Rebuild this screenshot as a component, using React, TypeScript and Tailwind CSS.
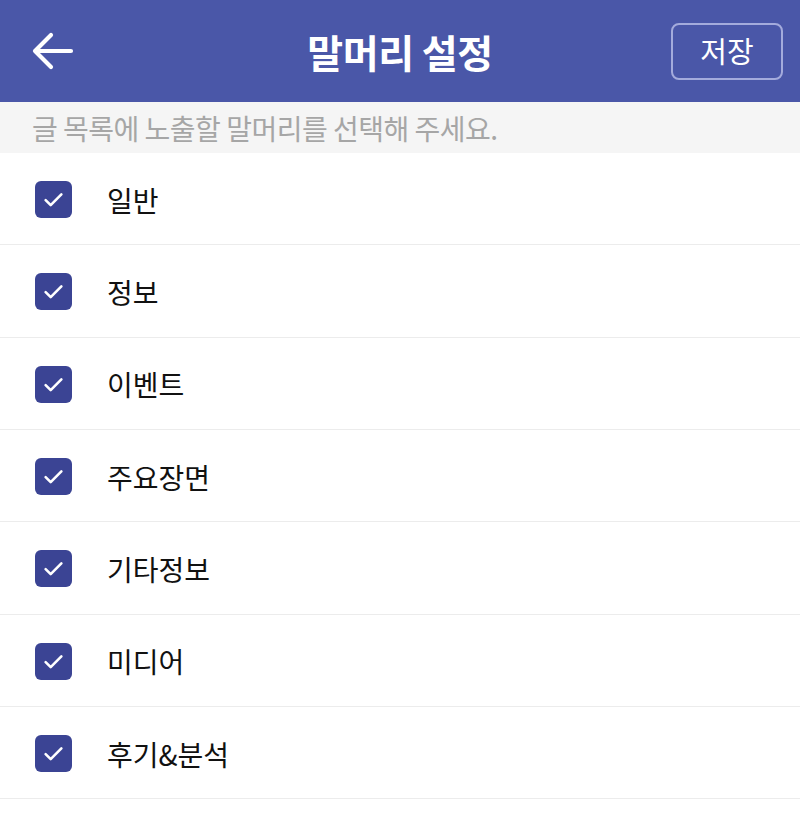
const categories = ['일반', '정보', '이벤트', '주요장면', '기타정보', '미디어', '후기&분석'];

function CheckBox() {
  return (
    <div className="flex h-[37px] w-[37px] items-center justify-center rounded-[6px] bg-[#3b4494]">
      <svg width="27" height="27" viewBox="0 0 24 24" fill="none">
        <path d="M5 12.5l4.5 4.5L19 7.5" stroke="white" strokeWidth="2.3" strokeLinecap="round" strokeLinejoin="round" />
      </svg>
    </div>
  );
}

export default function App() {
  return (
    <div className="min-h-[818px] w-full bg-white font-['Noto_Sans_CJK_KR','Noto_Sans',sans-serif]">
      <header className="relative flex h-[102px] items-center justify-between bg-[#4a57a8] px-[32px]">
        <svg width="42" height="38" viewBox="0 0 42 38" fill="none">
          <path d="M3 19h36M19 3L3 19l16 16" stroke="white" strokeWidth="4.2" strokeLinecap="round" strokeLinejoin="round" />
        </svg>
        <h1 className="absolute left-1/2 top-1/2 -translate-x-1/2 -translate-y-1/2 text-[39px] font-bold tracking-[-0.5px] text-white">
          말머리 설정
        </h1>
        <button className="-mr-[15px] flex h-[57px] w-[112px] items-center justify-center rounded-[8px] border-2 border-[#a4abdc] text-[29px] text-white">
          저장
        </button>
      </header>

      <div className="flex h-[51px] items-center bg-[#f5f5f5] px-[32px] text-[28px] tracking-[-0.5px] text-[#a6a6a6]">
        글 목록에 노출할 말머리를 선택해 주세요.
      </div>

      <ul>
        {categories.map((name) => (
          <li key={name} className="flex h-[92.33px] items-center gap-[35px] border-b border-[#ececec] pl-[35px] pt-[2px]">
            <CheckBox />
            <span className="text-[28px] text-[#111]">{name}</span>
          </li>
        ))}
      </ul>
    </div>
  );
}
